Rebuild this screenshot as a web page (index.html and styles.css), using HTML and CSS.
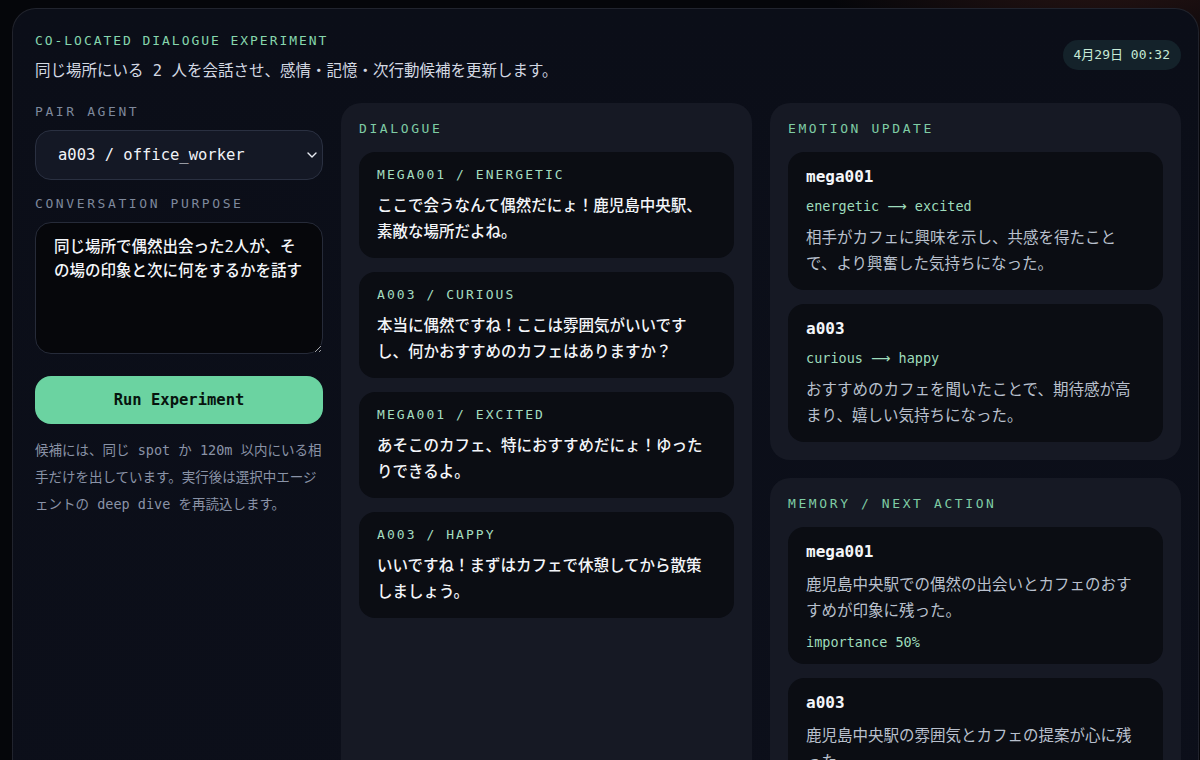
FILE: index.html
```html
<!DOCTYPE html>
<html lang="ja">
<head>
  <meta charset="UTF-8">
  <meta name="viewport" content="width=device-width, initial-scale=1.0">
  <title>Co-located Dialogue Experiment</title>
  <link rel="stylesheet" href="styles.css">
</head>
<body>
  <main class="shell">
    <header class="head">
      <div>
        <p class="eyebrow">CO-LOCATED DIALOGUE EXPERIMENT</p>
        <p class="lead">同じ場所にいる 2 人を会話させ、感情・記憶・次行動候補を更新します。</p>
      </div>
      <span class="clock">4月29日 00:32</span>
    </header>

    <div class="grid">
      <!-- controls -->
      <section class="controls">
        <label class="field-label" for="pair">PAIR AGENT</label>
        <div class="select-wrap">
          <select id="pair" class="select">
            <option>a003 / office_worker</option>
            <option>a005 / student</option>
          </select>
          <svg class="chevron" width="10" height="6" viewBox="0 0 10 6">
            <path d="M1 1l4 4 4-4" fill="none" stroke="#e8ebf2" stroke-width="1.4" stroke-linecap="round" stroke-linejoin="round"/>
          </svg>
        </div>

        <label class="field-label" for="purpose">CONVERSATION PURPOSE</label>
        <textarea id="purpose" class="purpose">同じ場所で偶然出会った2人が、その場の印象と次に何をするかを話す</textarea>

        <button type="button" class="run">Run Experiment</button>

        <p class="hint">候補には、同じ spot か 120m 以内にいる相手だけを出しています。実行後は選択中エージェントの deep dive を再読込します。</p>
      </section>

      <!-- dialogue log -->
      <section class="panel">
        <h2 class="panel-title">DIALOGUE</h2>
        <div class="stack">
          <div class="card">
            <div class="speaker">MEGA001 / ENERGETIC</div>
            <p class="line">ここで会うなんて偶然だにょ！鹿児島中央駅、素敵な場所だよね。</p>
          </div>
          <div class="card">
            <div class="speaker">A003 / CURIOUS</div>
            <p class="line">本当に偶然ですね！ここは雰囲気がいいですし、何かおすすめのカフェはありますか？</p>
          </div>
          <div class="card">
            <div class="speaker">MEGA001 / EXCITED</div>
            <p class="line">あそこのカフェ、特におすすめだにょ！ゆったりできるよ。</p>
          </div>
          <div class="card">
            <div class="speaker">A003 / HAPPY</div>
            <p class="line">いいですね！まずはカフェで休憩してから散策しましょう。</p>
          </div>
        </div>
      </section>

      <div class="side">
        <section class="panel">
          <h2 class="panel-title">EMOTION UPDATE</h2>
          <div class="stack">
            <div class="card">
              <div class="agent">mega001</div>
              <div class="shift">energetic <span class="arrow">⟶</span> excited</div>
              <p class="note">相手がカフェに興味を示し、共感を得たことで、より興奮した気持ちになった。</p>
            </div>
            <div class="card">
              <div class="agent">a003</div>
              <div class="shift">curious <span class="arrow">⟶</span> happy</div>
              <p class="note">おすすめのカフェを聞いたことで、期待感が高まり、嬉しい気持ちになった。</p>
            </div>
          </div>
        </section>

        <section class="panel">
          <h2 class="panel-title">MEMORY / NEXT ACTION</h2>
          <div class="stack">
            <div class="card">
              <div class="agent">mega001</div>
              <p class="note memo">鹿児島中央駅での偶然の出会いとカフェのおすすめが印象に残った。</p>
              <div class="shift">importance 50%</div>
            </div>
            <div class="card">
              <div class="agent">a003</div>
              <p class="note memo">鹿児島中央駅の雰囲気とカフェの提案が心に残った。</p>
              <div class="shift">importance 45%</div>
            </div>
          </div>
        </section>
      </div>
    </div>
  </main>
</body>
</html>
```

FILE: styles.css
```css
body {
  margin: 0;
  padding: 8px 1px 0 12px;
  min-height: 100vh;
  overflow: hidden;
  background:
    radial-gradient(ellipse 420px 160px at 92% -40px, rgba(120, 52, 40, 0.35), transparent 70%),
    #05060a;
  font-family: "DejaVu Sans Mono", "Noto Sans CJK JP", monospace;
  color: #e9ecf3;
}

p, h2 {
  margin: 0;
}

.shell {
  border: 1px solid rgba(255, 255, 255, 0.09);
  border-radius: 24px 24px 0 0;
  background: linear-gradient(180deg, #0b0e18, #0c0f1a);
  padding: 24px 17px 40px 22px;
  min-height: 820px;
}

.head {
  display: flex;
  justify-content: space-between;
  align-items: flex-start;
}

.eyebrow {
  font-size: 13px;
  line-height: 16px;
  letter-spacing: 1.95px;
  color: #86d6ad;
}

.lead {
  margin-top: 11px;
  font-size: 15.5px;
  line-height: 22px;
  color: #d3d8e2;
}

.clock {
  margin-top: 7px;
  font-size: 13px;
  line-height: 30px;
  padding: 0 11px;
  border-radius: 15px;
  background: #14222a;
  color: #c6ead6;
}

.grid {
  display: grid;
  grid-template-columns: 288px 1fr 1fr;
  gap: 18px;
  margin-top: 21px;
}

/* left column */
.controls {
  display: flex;
  flex-direction: column;
  padding-top: 1px;
}

.field-label {
  font-size: 13px;
  line-height: 16px;
  letter-spacing: 2.6px;
  color: #7e889c;
  margin-bottom: 10px;
}

.select-wrap {
  position: relative;
  margin-bottom: 16px;
}

.select {
  appearance: none;
  -webkit-appearance: none;
  width: 100%;
  height: 50px;
  padding: 0 40px 0 22px;
  border: 1px solid #2a3041;
  border-radius: 16px;
  background: #141825;
  color: #f1f3f8;
  font: 15.5px "DejaVu Sans Mono", monospace;
}

.chevron {
  position: absolute;
  right: 6px;
  top: 22px;
}

.purpose {
  box-sizing: border-box;
  width: 100%;
  height: 132px;
  margin: 0;
  padding: 12px 18px;
  border: 1px solid #262b39;
  border-radius: 16px;
  background: #06070b;
  color: #f4f6fa;
  font: 500 15.5px/24px "DejaVu Sans Mono", "Noto Sans CJK JP", monospace;
}

.run {
  margin-top: 22px;
  height: 48px;
  border: none;
  border-radius: 16px;
  background: #6bd3a1;
  color: #07140e;
  font: 600 15.5px "DejaVu Sans Mono", monospace;
  cursor: pointer;
}

.hint {
  margin-top: 13px;
  font-size: 13.5px;
  line-height: 27px;
  color: #8a93a7;
}

/* panels */
.panel {
  background: #161924;
  border-radius: 20px;
  padding: 18px;
}

.panel-title {
  font-size: 13px;
  line-height: 16px;
  font-weight: normal;
  letter-spacing: 2.6px;
  color: #7fcca4;
  margin-bottom: 15px;
}

.stack {
  display: flex;
  flex-direction: column;
  gap: 14px;
}

.card {
  background: #0b0d13;
  border-radius: 16px;
  padding: 15px 18px 13px;
}

.speaker {
  font-size: 13px;
  line-height: 16px;
  letter-spacing: 2.05px;
  color: #a4ddc0;
  margin-bottom: 10px;
}

.line {
  font-size: 15.5px;
  line-height: 26px;
  font-weight: 500;
  color: #f3f5f9;
}

.side {
  display: flex;
  flex-direction: column;
  gap: 18px;
  align-self: start;
}

.agent {
  font-size: 16px;
  line-height: 20px;
  font-weight: bold;
  color: #f4f6fa;
  margin-bottom: 10px;
}

.shift {
  font-size: 13.5px;
  line-height: 18px;
  color: #9edcbc;
}

.arrow {
  font-family: "DejaVu Sans", sans-serif;
}

.note {
  margin-top: 10px;
  font-size: 15.5px;
  line-height: 26px;
  color: #b9c0cd;
}

.note.memo {
  margin-top: 0;
  margin-bottom: 9px;
}
```
